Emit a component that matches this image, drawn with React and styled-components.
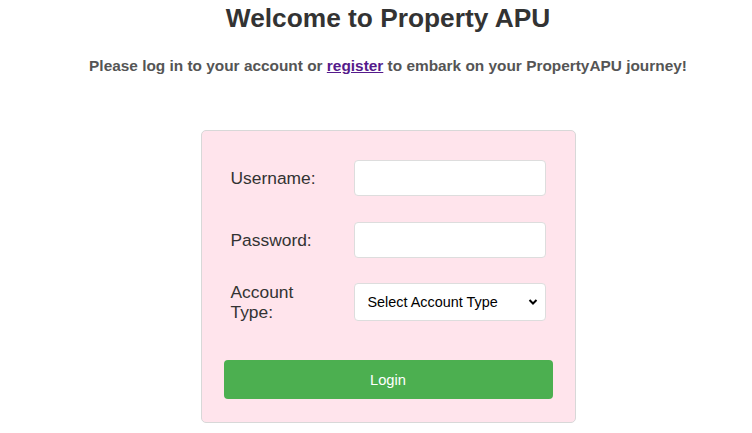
import React from "react";
import styled, { createGlobalStyle } from "styled-components";

const GlobalStyle = createGlobalStyle`
  body {
    margin: 0;
    background: #ffffff;
    font-family: "Liberation Sans", Arial, sans-serif;
  }
`;

const Page = styled.div`
  padding-left: 24px;
  text-align: center;
`;

const Title = styled.h1`
  margin: 3px 0 0;
  font-size: 26.3px;
  line-height: 30px;
  font-weight: bold;
  color: #333333;
`;

const Intro = styled.p`
  margin: 24px 0 0;
  font-size: 15.4px;
  line-height: 18px;
  font-weight: bold;
  color: #555555;
`;

const RegisterLink = styled.a`
  color: #551a8b;
  text-decoration: underline;
`;

const FormBox = styled.form`
  box-sizing: border-box;
  width: 375px;
  margin: 55px auto 0;
  padding: 29px 22px 23px;
  background: #ffe4ec;
  border: 1px solid #d8d8d8;
  border-radius: 5px;
  text-align: left;
`;

const Row = styled.div`
  display: flex;
  align-items: center;
  padding: 0 7px;
  margin-bottom: ${(p) => p.gap}px;
`;

const Label = styled.label`
  width: 100px;
  margin-right: 23px;
  font-size: 17.4px;
  line-height: 20px;
  color: #333333;
`;

const TextInput = styled.input`
  box-sizing: border-box;
  width: 192px;
  height: 36px;
  padding: 0 10px;
  border: 1px solid #dddddd;
  border-radius: 4px;
  background: #ffffff;
  font-family: inherit;
  font-size: 14px;
  outline: none;
`;

const SelectWrap = styled.div`
  position: relative;
  width: 192px;
  height: 38px;
`;

const Select = styled.select`
  box-sizing: border-box;
  width: 100%;
  height: 100%;
  padding: 0 0 0 13px;
  border: 1px solid #dddddd;
  border-radius: 4px;
  background: #ffffff;
  font-family: "Liberation Sans", Arial, sans-serif;
  font-size: 14.4px;
  color: #000000;
  appearance: none;
  outline: none;
`;

const Chevron = styled.svg`
  position: absolute;
  right: 8px;
  top: 14px;
  pointer-events: none;
`;

const LoginButton = styled.button`
  display: block;
  width: 100%;
  height: 39px;
  border: none;
  border-radius: 4px;
  background: #4caf50;
  color: #ffffff;
  font-family: "Liberation Sans", Arial, sans-serif;
  font-size: 14.7px;
  cursor: pointer;
`;

export default function App() {
  return (
    <>
      <GlobalStyle />
      <Page>
        <Title>Welcome to Property APU</Title>
        <Intro>
          Please log in to your account or <RegisterLink href="#">register</RegisterLink> to embark on your
          PropertyAPU journey!
        </Intro>
        <FormBox onSubmit={(e) => e.preventDefault()}>
          <Row gap={26}>
            <Label htmlFor="username">Username:</Label>
            <TextInput id="username" type="text" />
          </Row>
          <Row gap={24}>
            <Label htmlFor="password">Password:</Label>
            <TextInput id="password" type="password" />
          </Row>
          <Row gap={38}>
            <Label htmlFor="accountType">Account Type:</Label>
            <SelectWrap>
              <Select id="accountType" defaultValue="">
                <option value="">Select Account Type</option>
                <option value="tenant">Tenant</option>
                <option value="owner">Owner</option>
              </Select>
              <Chevron width="10" height="10" viewBox="0 0 10 10">
                <path d="M1.5 3 L5 6.5 L8.5 3" fill="none" stroke="#000" strokeWidth="2" />
              </Chevron>
            </SelectWrap>
          </Row>
          <LoginButton type="submit">Login</LoginButton>
        </FormBox>
      </Page>
    </>
  );
}
